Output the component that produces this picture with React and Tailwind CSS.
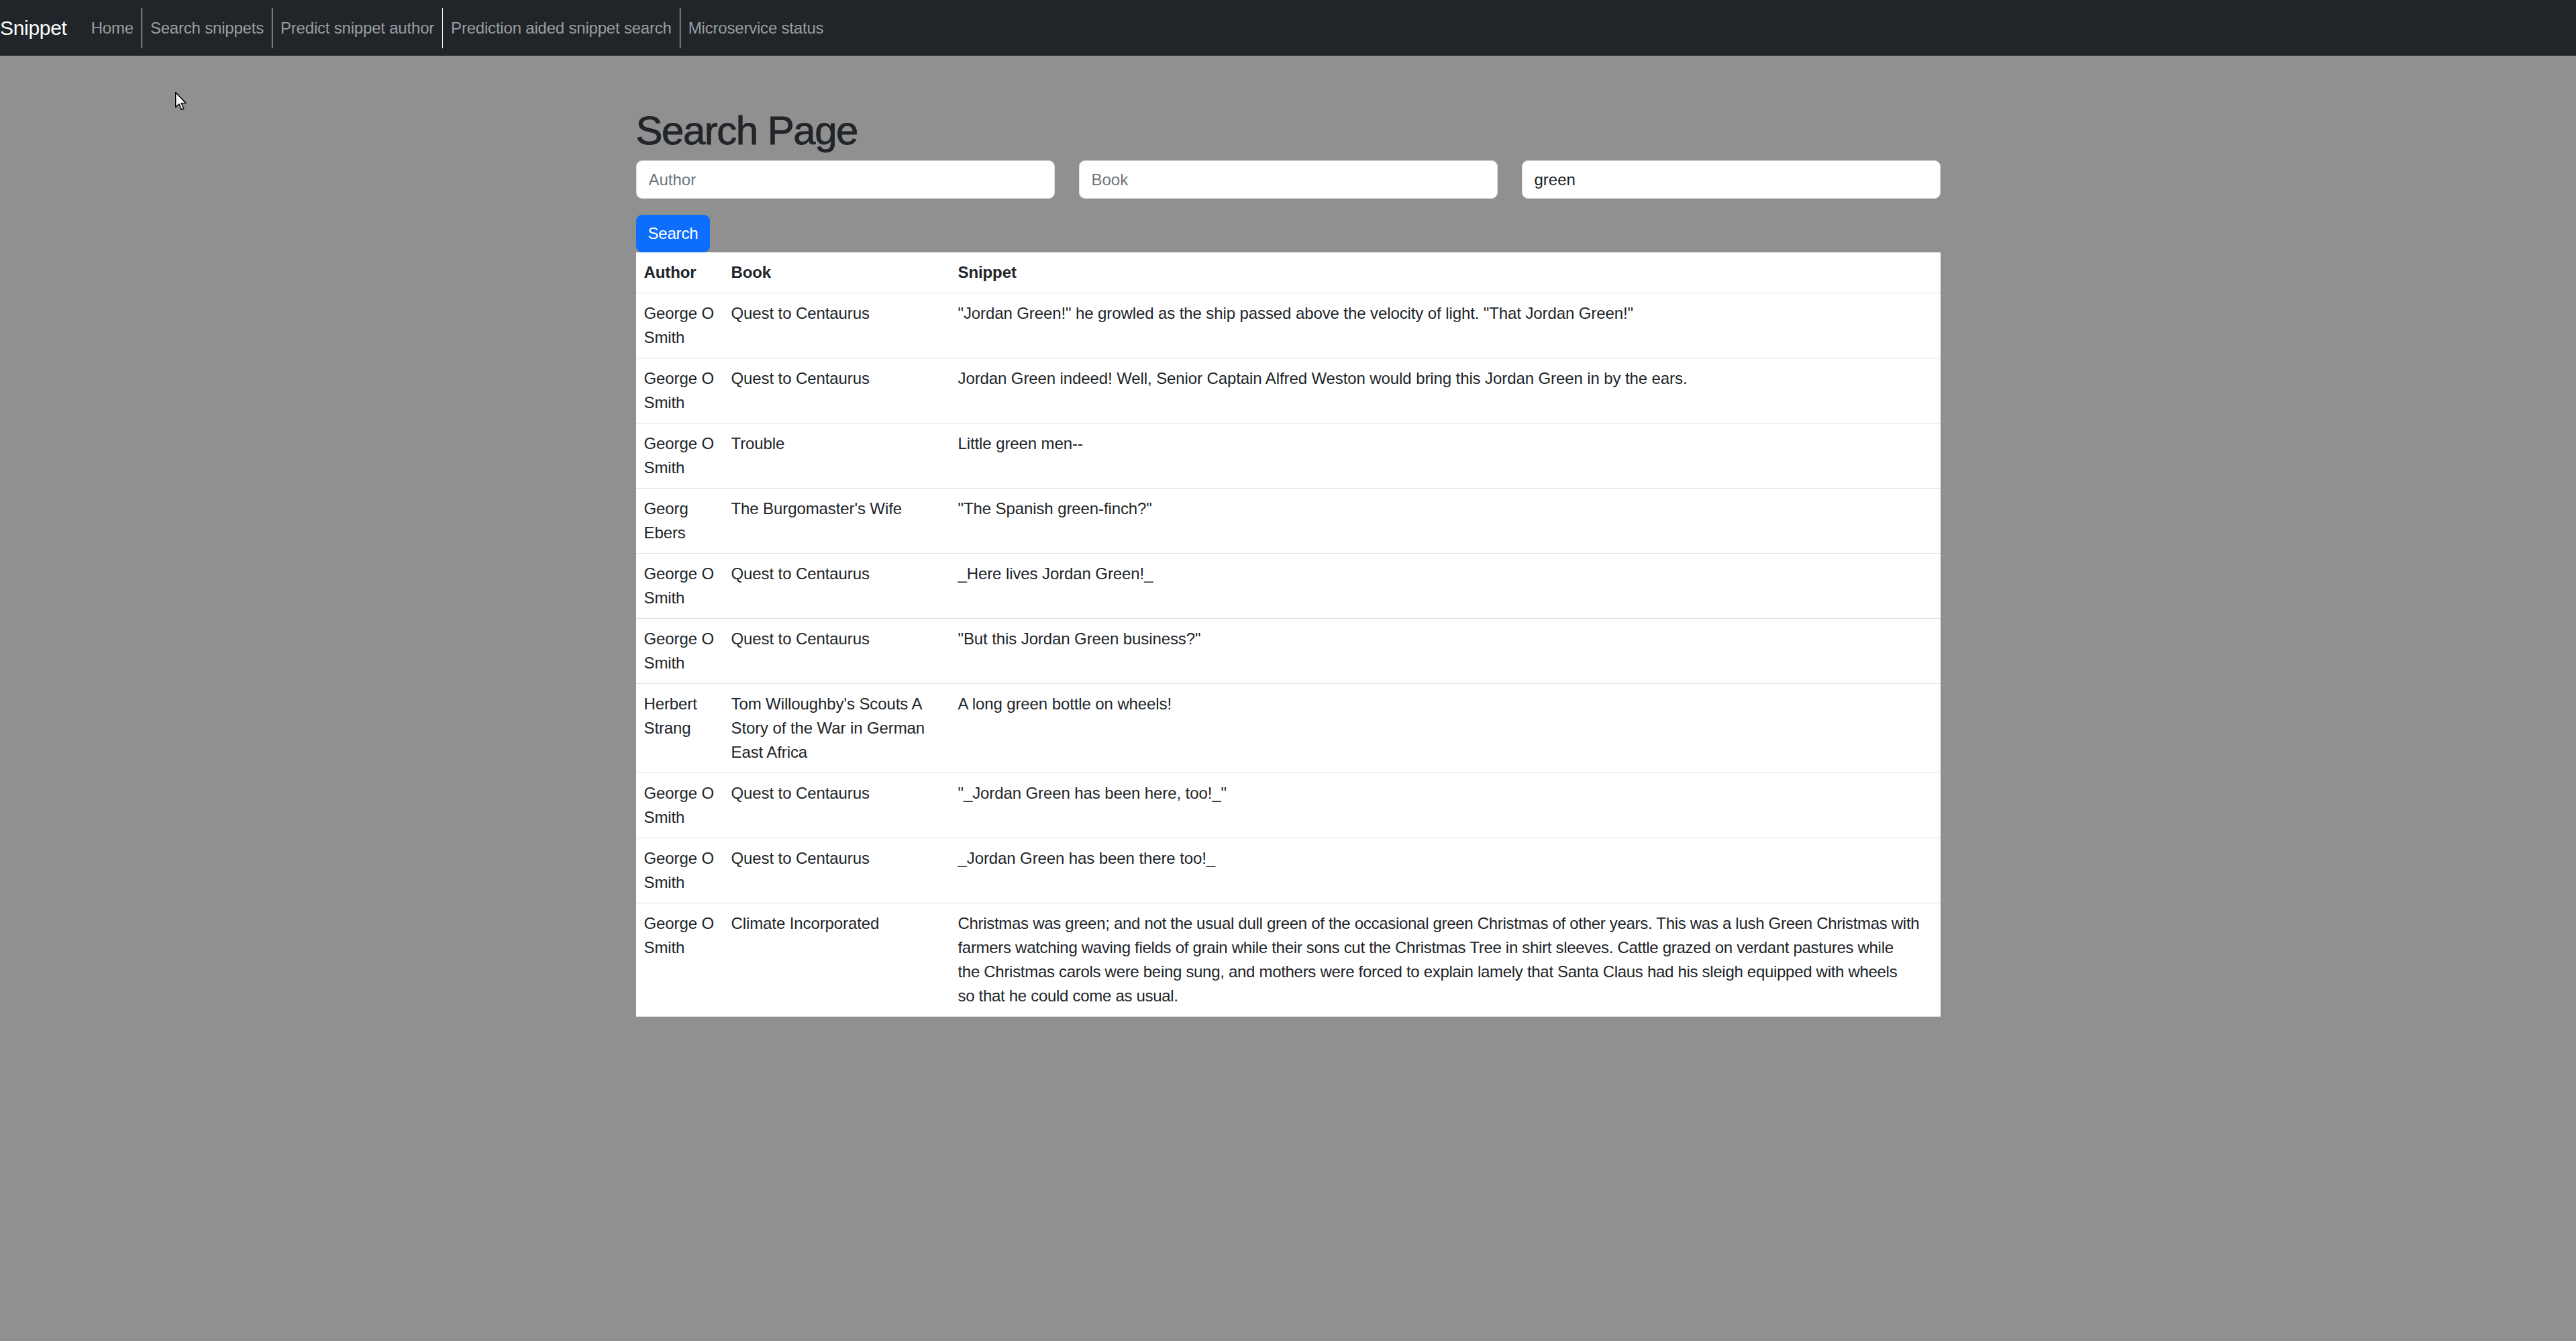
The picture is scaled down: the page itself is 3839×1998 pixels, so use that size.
import React from "react";

const rows = [
  ["George O Smith", "Quest to Centaurus", "\"Jordan Green!\" he growled as the ship passed above the velocity of light. \"That Jordan Green!\""],
  ["George O Smith", "Quest to Centaurus", "Jordan Green indeed! Well, Senior Captain Alfred Weston would bring this Jordan Green in by the ears."],
  ["George O Smith", "Trouble", "Little green men--"],
  ["Georg Ebers", "The Burgomaster's Wife", "\"The Spanish green-finch?\""],
  ["George O Smith", "Quest to Centaurus", "_Here lives Jordan Green!_"],
  ["George O Smith", "Quest to Centaurus", "\"But this Jordan Green business?\""],
  ["Herbert Strang", "Tom Willoughby's Scouts A Story of the War in German East Africa", "A long green bottle on wheels!"],
  ["George O Smith", "Quest to Centaurus", "\"_Jordan Green has been here, too!_\""],
  ["George O Smith", "Quest to Centaurus", "_Jordan Green has been there too!_"],
];

const longText = [
  "Christmas was green; and not the usual dull green of the occasional green Christmas of other years. This was a lush Green Christmas with",
  "farmers watching waving fields of grain while their sons cut the Christmas Tree in shirt sleeves. Cattle grazed on verdant pastures while",
  "the Christmas carols were being sung, and mothers were forced to explain lamely that Santa Claus had his sleigh equipped with wheels",
  "so that he could come as usual.",
];

const links = ["Home", "Search snippets", "Predict snippet author", "Prediction aided snippet search", "Microservice status"];

export default function App() {
  return (
    <div className="relative min-h-screen bg-[#909090] font-['Liberation_Sans',Arial,sans-serif] text-[#212529]">
      <nav className="h-[83px] bg-[#212529] flex items-center">
        <span className="text-[30px] leading-[45px] text-white mr-[24px] tracking-[-0.3px]">Snippet</span>
        <div className="flex items-center h-[60px]">
          {links.map((l, i) => (
            <span
              key={l}
              className={
                i === 0
                  ? "px-[12px] text-[24px] leading-[60px] text-[#9a9da0] tracking-[-0.2px]"
                  : "px-[12px] text-[24px] leading-[60px] text-[#9a9da0] tracking-[-0.2px] border-l border-white"
              }
            >
              {l}
            </span>
          ))}
        </div>
      </nav>

      <svg className="absolute left-[261px] top-[137px]" width="19" height="28" viewBox="0 0 13 19">
        <path d="M0.5 0.5 L0.5 15.5 L4 12.2 L6.6 18 L8.8 17 L6.3 11.3 L11 11.3 Z" fill="#fff" stroke="#000" strokeWidth="1" strokeLinejoin="round" />
      </svg>

      <main className="w-[1944px] mx-auto pt-[76px]">
        <h1 className="text-[60px] leading-[72px] font-normal mb-[8px] tracking-[-1.5px] [-webkit-text-stroke:0.8px_#212529]">Search Page</h1>
        <div className="grid grid-cols-3 gap-x-[36px]">
          <input
            className="h-[57px] bg-white border border-[#dee2e6] rounded-[9px] px-[18px] text-[24px] placeholder:text-[#6c757d] outline-none"
            placeholder="Author"
          />
          <input
            className="h-[57px] bg-white border border-[#dee2e6] rounded-[9px] px-[18px] text-[24px] placeholder:text-[#6c757d] outline-none"
            placeholder="Book"
          />
          <input
            className="h-[57px] bg-white border border-[#dee2e6] rounded-[9px] px-[18px] text-[24px] text-[#212529] outline-none"
            defaultValue="green"
          />
        </div>
        <button className="mt-[24px] h-[56px] px-[18px] bg-[#0d6efd] text-white text-[24px] rounded-[9px] tracking-[-0.2px]">Search</button>
        <table className="w-full table-fixed bg-white border-collapse text-[24px] leading-[36px] tracking-[-0.1px]">
          <thead>
            <tr className="border-b border-[#dee2e6]">
              <th className="w-[130px] p-[12px] text-left font-bold align-top">Author</th>
              <th className="w-[338px] p-[12px] text-left font-bold align-top">Book</th>
              <th className="p-[12px] text-left font-bold align-top">Snippet</th>
            </tr>
          </thead>
          <tbody>
            {rows.map((r, i) => (
              <tr key={i} className="border-b border-[#dee2e6]">
                <td className="p-[12px] align-top">{r[0]}</td>
                <td className="p-[12px] align-top">{r[1]}</td>
                <td className="p-[12px] align-top">{r[2]}</td>
              </tr>
            ))}
            <tr className="border-b border-[#dee2e6]">
              <td className="p-[12px] align-top">George O Smith</td>
              <td className="p-[12px] align-top">Climate Incorporated</td>
              <td className="p-[12px] align-top whitespace-nowrap tracking-[-0.3px]">
                {longText.map((t) => (
                  <div key={t}>{t}</div>
                ))}
              </td>
            </tr>
          </tbody>
        </table>
      </main>
    </div>
  );
}
